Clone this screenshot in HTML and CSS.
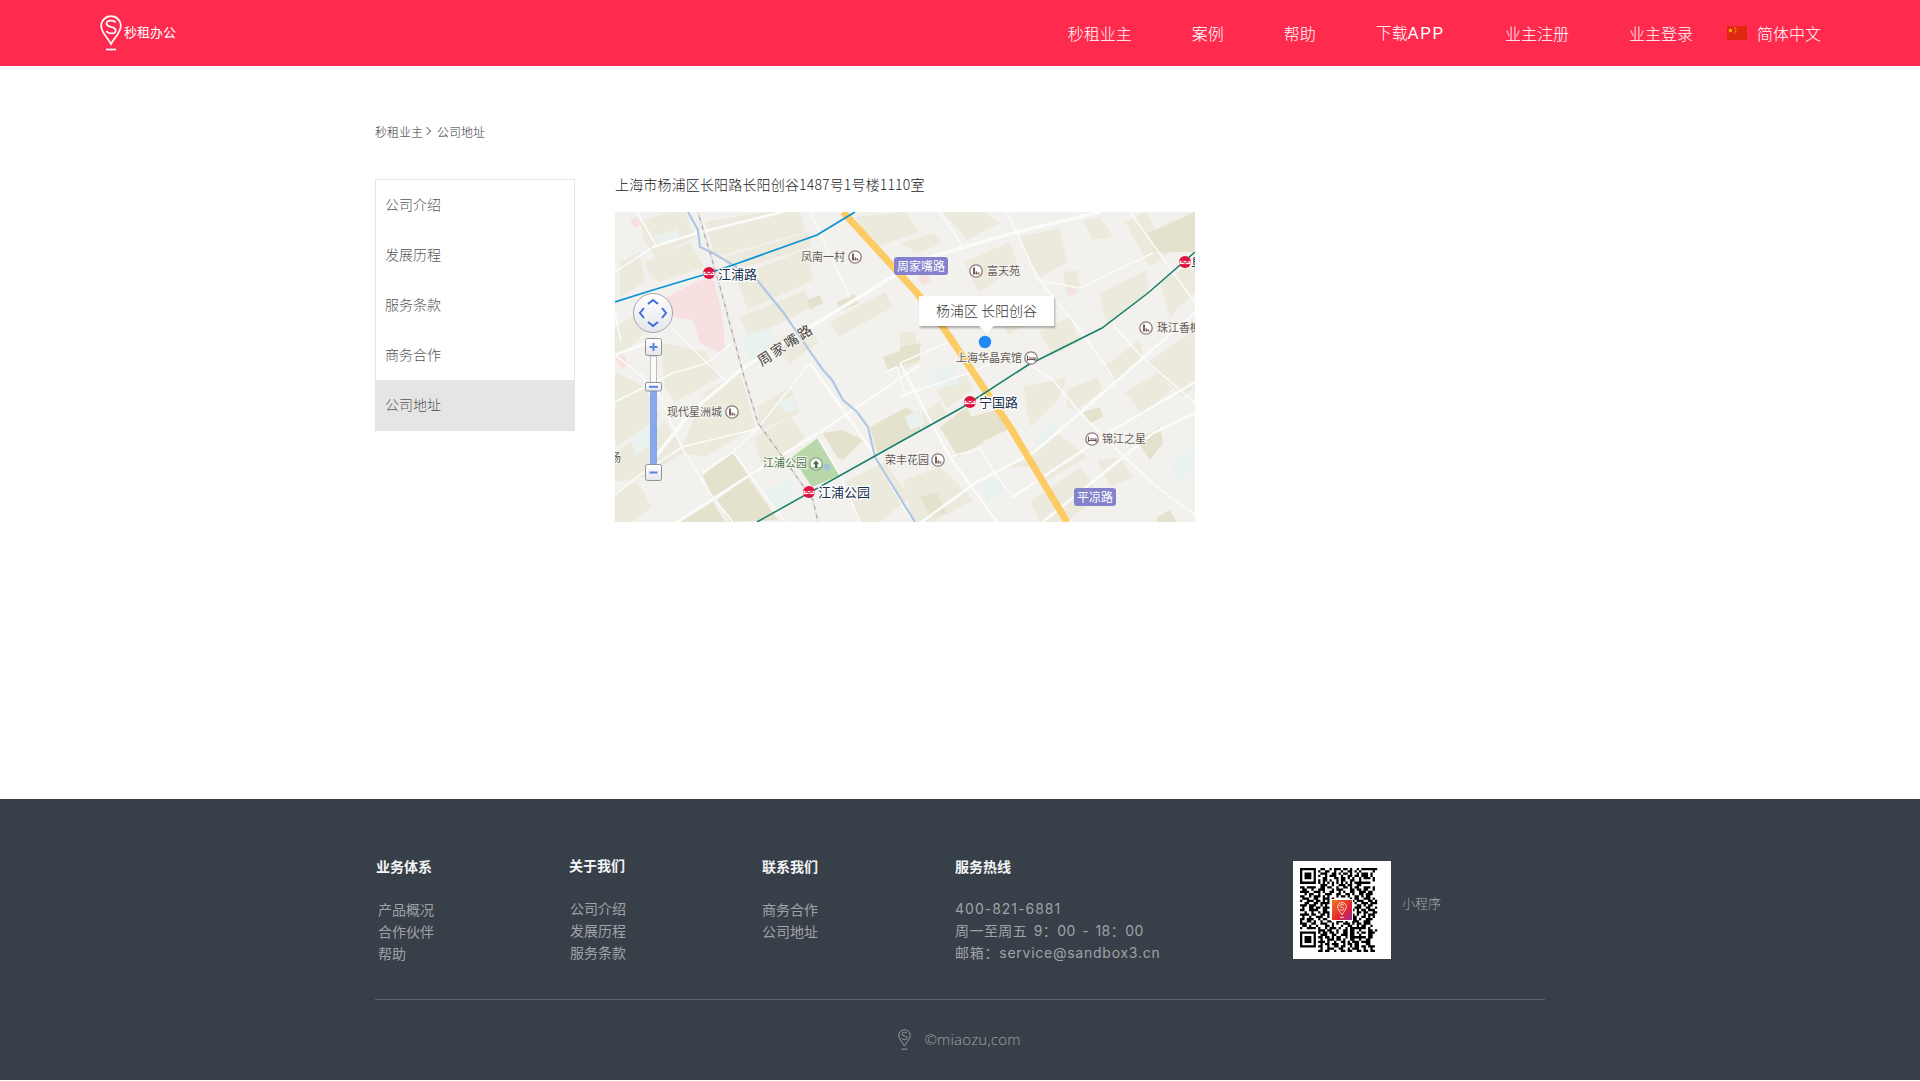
FILE: index.html
```html
<!DOCTYPE html>
<html lang="zh-CN">
<head>
<meta charset="utf-8">
<title>公司地址</title>
<link rel="stylesheet" href="styles.css">
</head>
<body>
<svg class="defs" width="0" height="0" aria-hidden="true">
  <defs>
    <symbol id="pin" viewBox="0 0 22 36">
      <path class="pin-line" d="M11 1.200C5.400 1.200 1.200 5.500 1.200 11c0 6.600 6.200 11.300 9.800 18 3.600-6.700 9.800-11.400 9.800-18C20.800 5.500 16.600 1.200 11 1.200z"/>
      <path class="pin-line" d="M15.500 7.500C14.200 5 6.800 4.600 6.500 8.500c-.3 4.300 9.200 2.500 9.200 7 0 3.900-7.400 3.700-9.300.6"/>
      <path class="pin-line" d="M6 34.500h10"/>
    </symbol>
    <symbol id="metro" viewBox="0 0 12 12">
      <circle cx="6" cy="6" r="6" fill="#e0103f"/>
      <path d="M.5 6.500h11" stroke="#fff" stroke-width="3.200"/>
      <path d="M2 6.800c1-1.600 2-1.600 2.800-.4.600.8 1.800.8 2.400 0 .8-1.200 1.800-1.200 2.800.4" fill="none" stroke="#e0103f" stroke-width="1.200"/>
    </symbol>
    <symbol id="poi-b" viewBox="0 0 14 14">
      <circle cx="7" cy="7" r="6.200" fill="#fff" stroke="#8c7a78" stroke-width="1.300"/>
      <path d="M4 10.500V3.500h2v7zM6.500 10.500v-3h1.800v3zM8.800 10.500v-2h1.500v2z" fill="#7a5f5c"/>
    </symbol>
    <symbol id="poi-h" viewBox="0 0 14 14">
      <circle cx="7" cy="7" r="6.200" fill="#fff" stroke="#8c7a78" stroke-width="1.300"/>
      <path d="M3.500 4.500v5.500M3.500 8.500h7.500V10M5 7h6v1.500" fill="none" stroke="#6d5552" stroke-width="1.200"/>
    </symbol>
    <symbol id="poi-p" viewBox="0 0 14 14">
      <circle cx="7" cy="7" r="6.200" fill="#fff" stroke="#8c9a80" stroke-width="1.300"/>
      <path d="M7 3.200l3 4H8.300v3.300H11v.7H3.500v-.7H6V7.200H4z" fill="#3f6d3a"/>
    </symbol>
    <linearGradient id="pad" x1="0" y1="0" x2="0" y2="1">
      <stop offset="0" stop-color="#fff"/>
      <stop offset="1" stop-color="#e4e6ea"/>
    </linearGradient>
  </defs>
</svg>

<header class="topbar">
  <a class="brand">
    <svg class="brand-pin"><use href="#pin"/></svg>
    <span class="brand-name">秒租办公</span>
  </a>
  <nav class="topnav">
    <a class="topnav-item">秒租业主</a>
    <a class="topnav-item">案例</a>
    <a class="topnav-item">帮助</a>
    <a class="topnav-item">下载<span class="topnav-latin">APP</span></a>
    <a class="topnav-item">业主注册</a>
    <a class="topnav-item">业主登录</a>
    <a class="lang">
      <svg class="flag" viewBox="0 0 20 14">
        <rect width="20" height="14" fill="#de2910"/>
        <path d="M3.500 2l.6 1.700h1.800l-1.500 1 .6 1.700-1.500-1-1.500 1 .6-1.700-1.500-1h1.800z" fill="#ffde00"/>
        <path d="M7.300 1.300h.9v.9h-.9zM8.300 3h.9v.9h-.9zM8.300 5h.9v.9h-.9zM7.300 6.600h.9v.9h-.9z" fill="#ffde00"/>
      </svg>
      <span>简体中文</span>
    </a>
  </nav>
</header>

<main class="page">
  <div class="crumbs"><span>秒租业主</span><span class="crumb-sep"></span><span>公司地址</span></div>
  <div class="content">
    <ul class="side">
      <li class="side-item">公司介绍</li>
      <li class="side-item">发展历程</li>
      <li class="side-item">服务条款</li>
      <li class="side-item">商务合作</li>
      <li class="side-item side-item-on">公司地址</li>
    </ul>
    <section class="address">
      <p class="address-line">上海市杨浦区长阳路长阳创谷1487号1号楼1110室</p>
      <div class="map">
        <svg class="map-art" viewBox="0 0 580 310" width="580" height="310">
          <rect width="580" height="310" fill="#f3f1ee"/>
          <g class="tan">
            <path d="M25 10 55 0h15l10 25-40 20-10-15z"/><path d="M30 50 75 30l15 25-45 15-10-5z"/>
            <path d="M90 10 150 0h35l5 20-90 25z"/><path d="M110 45 195 20v15L115 60z"/>
            <path d="M5 50 25 40l5 30L5 85z"/><path d="M0 115 45 90l5 10-40 40-10 5z"/>
            <path d="M45 130 90 140l15 25-45 25-10-15z"/><path d="M0 160 30 175l15 30L0 235z"/>
            <path d="M0 240 50 210 70 240 30 265 0 270z"/><path d="M90 180 125 160l15 55-50 30-25-5z"/>
            <path d="M120 65 190 38l8 30-65 30z"/><path d="M125 105 190 78l5 18-60 30z"/>
            <path d="M142 195 175 175l10 26-40 17z"/><path d="M160 130 192 112l12 18-30 22z"/>
            <path d="M328 0h40l17 11-33 17z"/><path d="M285 31 318 21l10 10-26 10z"/>
            <path d="M405 25 445 16l7 35-27 14-13-20z"/><path d="M468 8 485 5l13 20-20 3z"/>
            <path d="M448 60 462 58l3 20-13 7z"/><path d="M485 81 532 58l1 23-41 30-4-10z"/>
            <path d="M452 178 482 165l6 13-26 20-10-3z"/><path d="M488 155 525 128l3 17-26 26z"/>
            <path d="M532 151 580 118v57l-12 10z"/><path d="M408 175 452 165l-7 20-30 30z"/>
            <path d="M395 255 442 221l30 24-44 26-10-16z"/><path d="M288 268 325 255l33 33-40 22h-20z"/>
            <path d="M482 248 505 245l13 20-23 10z"/><path d="M545 70 580 50v30l-25 25z"/>
            <path d="M350 50 395 30l8 25-40 25z"/><path d="M300 120h-15v40l20-10z"/>
            <path d="M510 10 530 0l25 40-20 15z"/><path d="M320 175 350 160l8 18-26 18z"/>
            <path d="M215 110 270 80l8 15-55 30z"/><path d="M0 280 22 270l15 25-20 15H0z"/>
            <path d="M230 270 270 250l25 35-30 25h-20z"/><path d="M140 225 175 205l15 20-30 30-15-5z"/>
            <path d="M415 290 465 255l20 30-35 25h-25z"/><path d="M510 180 545 160l12 18-30 25z"/>
            <path d="M240 5 290 0l15 20-45 15z"/><path d="M380 100 410 85l12 20-28 18z"/>
            <path d="M425 120 455 105l10 25-28 14z"/><path d="M300 205 325 190l8 14-25 14z"/>
          </g>
          <g class="tan-dark">
            <path d="M88 263 118 241l15 22-35 25z"/><path d="M102 288 133 265l30 43-48 2z"/>
            <path d="M65 310 98 290l12 20z"/><path d="M268 145 305 131v17l-32 10z"/>
            <path d="M192 88 205 83l3 8-13 7z"/><path d="M208 221 228 218l20 10-20 20-6-3z"/>
            <path d="M533 21 580 0v40h-40z"/><path d="M325 215 352 195l16 36-25 14z"/>
            <path d="M355 205 382 198l10 20-27 13z"/><path d="M285 135l23-4-23 20z"/>
            <path d="M522 228 545 215l3 16-13 17z"/><path d="M305 285 322 281l10 20-17 4z"/>
            <path d="M468 200 485 195l3 10-13 6z"/><path d="M222 90 240 82l3 10-18 7z"/>
            <path d="M542 305 555 298l7 12h-20z"/><path d="M255 215 292 195l13 10v13l-43 23z"/>
          </g>
          <g class="teal">
            <path d="M38 25 62 16l3 12-20 5z"/><path d="M125 125 155 115l8 25-25 15z"/>
            <path d="M313 161 338 151l7 20-23 7z"/><path d="M365 271 385 261l5 20-18 10z"/>
            <path d="M418 228 442 208l3 10-20 20z"/><path d="M15 225 35 215l8 15-22 12z"/>
            <path d="M150 280 175 265l5 25-18 10z"/><path d="M165 190l12-6 5 12-12 5z"/>
            <path d="M555 250 580 235v25l-18 12z"/><path d="M290 205l15-8 5 15-15 6z"/>
          </g>
          <g class="pink">
            <path d="M52 85 85 68l13-2 9 35 3 34-5 6-20-10-7-23-20-3z"/><path d="M15 8 22 5l5 8-7 3z"/>
            <path d="M0 145 8 140l5 12-6 5z"/><path d="M303 65l10-3 3 8-9 3z"/>
            <path d="M451 76l6-3 5 8-6 2z"/>
          </g>
          <path class="park" d="M177 245 203 226l22 37-28 12z"/>
          <circle class="pond" cx="212" cy="255" r="3.500"/>

          <g class="rd rd-s">
            <path d="M22 0 42 35"/><path d="M195 0 235 86"/><path d="M0 143 28 165 40 188"/>
            <path d="M58 116 92 151 110 168"/><path d="M0 190 58 161 92 151 117 131"/>
            <path d="M42 178 67 236 95 281 118 310"/><path d="M0 283 22 265 67 235 145 216"/>
            <path d="M87 261 118 240 143 216 195 151"/><path d="M118 240 135 263 170 310"/>
            <path d="M325 0 348 35"/><path d="M392 0 422 65 465 118 498 165"/><path d="M422 68 465 76 538 41"/>
            <path d="M515 0 580 91"/><path d="M498 113 528 146 580 191"/>
            <path d="M412 151 438 168 465 201 502 238 542 275 580 303"/>
            <path d="M285 151 332 131"/><path d="M285 185 362 158 398 141"/>
            <path d="M335 245 365 236 382 265 398 285"/><path d="M0 60 38 35"/>
            <path d="M270 160 282 155 290 183 305 175"/><path d="M0 100l6 30"/>
            <path d="M225 263 245 310"/><path d="M203 226 225 263"/>
          </g>
          <g class="rd rd-m">
            <path d="M38 35 82 21 168 0"/><path d="M62 310 135 263 208 218 305 153"/>
            <path d="M195 151 258 241 295 305"/><path d="M418 241 465 201 528 146 580 101"/>
            <path d="M305 311 362 270 418 241"/><path d="M285 151 308 195 335 245 382 310"/>
            <path d="M398 285 458 245 498 218 580 170"/><path d="M428 310 538 221 580 201"/>
            <path d="M0 143 22 135 45 125"/>
          </g>
          <path class="rd rd-l" d="M38 248 75 201 128 156 195 115 282 62 315 45 398 21 485 0"/>
          <path class="water" d="M73 0 83 18 85 35 98 41 118 53 142 68 168 100 192 135 208 158 217 168 228 188 242 200 253 215 260 245 282 281 300 310"/>
          <path class="rail" d="M83 0 105 75 128 161 143 211 172 251 198 288 203 310"/>
          <path class="rail-dash" d="M83 0 105 75 128 161 143 211 172 251 198 288 203 310"/>
          <path class="highway" d="M228 0 302 81 328 115 368 175 395 215 452 310"/>
          <path class="line-blue" d="M0 90 38 78 88 63 118 53 202 23 240 0"/>
          <path class="line-green" d="M142 310 285 230 348 195 413 153 487 116 533 81 580 40"/>

          <use href="#metro" x="88" y="55" width="12" height="12"/>
          <use href="#metro" x="188" y="274" width="12" height="12"/>
          <use href="#metro" x="349" y="184" width="12" height="12"/>
          <use href="#metro" x="564" y="44" width="12" height="12"/>
          <use href="#poi-b" x="233" y="38" width="14" height="14"/>
          <use href="#poi-b" x="354" y="52" width="14" height="14"/>
          <use href="#poi-b" x="110" y="193" width="14" height="14"/>
          <use href="#poi-b" x="316" y="241" width="14" height="14"/>
          <use href="#poi-b" x="524" y="109" width="14" height="14"/>
          <use href="#poi-h" x="409" y="139" width="14" height="14"/>
          <use href="#poi-h" x="470" y="220" width="14" height="14"/>
          <use href="#poi-p" x="194" y="245" width="14" height="14"/>

          <text class="lb-metro" x="103" y="67">江浦路</text>
          <text class="lb-metro" x="203" y="285">江浦公园</text>
          <text class="lb-metro" x="364" y="195">宁国路</text>
          <text class="lb-metro" x="576" y="55">阜</text>
          <text class="lb-poi" x="186" y="49">凤南一村</text>
          <text class="lb-poi" x="372" y="63">富天苑</text>
          <text class="lb-poi" x="341" y="150">上海华晶宾馆</text>
          <text class="lb-poi" x="52" y="204">现代星洲城</text>
          <text class="lb-poi" x="270" y="252">荣丰花园</text>
          <text class="lb-poi" x="487" y="231">锦江之星</text>
          <text class="lb-poi" x="542" y="120">珠江香榭</text>
          <text class="lb-poi" x="-5" y="250">场</text>
          <text class="lb-park" x="148" y="255">江浦公园</text>
          <text class="lb-road" transform="translate(170 132) rotate(-33)">周家嘴路</text>

          <rect class="badge" x="279" y="45" width="54" height="18" rx="3"/>
          <text class="lb-badge" x="282" y="58.500">周家嘴路</text>
          <rect class="badge" x="459" y="276" width="42" height="18" rx="3"/>
          <text class="lb-badge" x="462" y="289.500">平凉路</text>

          <g class="ctl">
            <circle class="ctl-pad" cx="38" cy="101" r="19.500"/>
            <path class="ctl-arrow" d="M33 92l5-4 5 4M33 110l5 4 5-4M29 96l-4 5 4 5M47 96l4 5-4 5"/>
            <rect class="ctl-track" x="35.500" y="144" width="6" height="27"/>
            <rect class="ctl-fill" x="35.500" y="179" width="6" height="74"/>
            <rect class="ctl-btn" x="30.500" y="126.500" width="16" height="17" rx="2"/>
            <path class="ctl-mark" d="M34.500 135h8M38.500 131v8"/>
            <rect class="ctl-btn" x="30.500" y="170.500" width="16" height="8.500" rx="1.500"/>
            <path class="ctl-mark" d="M34 174.800h9"/>
            <rect class="ctl-btn" x="30.500" y="252.500" width="16" height="16" rx="2"/>
            <path class="ctl-mark" d="M34.500 260.500h8"/>
          </g>
          <circle class="here" cx="370" cy="130" r="6.200"/>
        </svg>
        <div class="map-tip">杨浦区 长阳创谷</div>
      </div>
    </section>
  </div>
</main>

<footer class="foot">
  <div class="foot-top">
    <div class="foot-col">
      <h4 class="foot-title">业务体系</h4>
      <ul class="foot-list foot-list-in"><li>产品概况</li><li>合作伙伴</li><li>帮助</li></ul>
    </div>
    <div class="foot-col foot-col-up">
      <h4 class="foot-title">关于我们</h4>
      <ul class="foot-list foot-list-nudge"><li>公司介绍</li><li>发展历程</li><li>服务条款</li></ul>
    </div>
    <div class="foot-col">
      <h4 class="foot-title">联系我们</h4>
      <ul class="foot-list"><li>商务合作</li><li>公司地址</li></ul>
    </div>
    <div class="foot-col foot-col-wide">
      <h4 class="foot-title">服务热线</h4>
      <ul class="foot-list foot-list-up foot-list-spaced"><li class="hot-num">400-821-6881</li><li class="hot-time">周一至周五 9：00 - 18：00</li><li class="hot-mail">邮箱：service@sandbox3.cn</li></ul>
    </div>
    <div class="foot-qr">
      <div class="qr">
        <svg class="qr-art" viewBox="0 0 37 37">
          <path class="qr-mods" d="M0 .5h7m2 0h2m2 0h1m1 0h3m1 0h2m1 0h1m2 0h1m1 0h7M0 1.500h1m5 0h1m1 0h1m2 0h2m2 0h1m2 0h1m2 0h2m1 0h1m1 0h1m5 0h1M0 2.500h1m1 0h3m1 0h1m2 0h3m2 0h2m1 0h1m1 0h2m1 0h1m2 0h1m1 0h3m1 0h1M0 3.500h1m1 0h3m1 0h1m1 0h1m2 0h1m1 0h3m2 0h1m2 0h2m1 0h2m1 0h3m1 0h1M0 4.500h1m1 0h3m1 0h1m3 0h2m3 0h2m1 0h2m1 0h1m1 0h1m2 0h1m1 0h3m1 0h1M0 5.500h1m5 0h1m1 0h1m1 0h2m1 0h1m2 0h1m1 0h2m2 0h2m2 0h1m5 0h1M0 6.500h7m1 0h1m1 0h1m1 0h1m1 0h1m1 0h1m1 0h1m1 0h1m1 0h1m1 0h7M9 7.500h3m2 0h1m2 0h3m1 0h2m2 0h2M0 8.500h2m1 0h4m2 0h2m1 0h2m2 0h1m2 0h2m1 0h1m1 0h2m2 0h3m1 0h1M1 9.500h2m2 0h1m2 0h3m3 0h1m1 0h3m3 0h2m1 0h2m1 0h2m2 0h1M0 10.500h4m2 0h3m1 0h1m2 0h2m2 0h1m1 0h1m2 0h2m2 0h3m1 0h2M2 11.500h1m1 0h2m2 0h1m2 0h3m2 0h2m2 0h2m1 0h1m2 0h2m1 0h3M0 12.500h2m2 0h1m1 0h3m1 0h1m1 0h1m3 0h1m1 0h2m1 0h1m2 0h2m1 0h1m1 0h2M1 13.500h3m2 0h2m2 0h3m1 0h1m7 0h1m1 0h2m2 0h3m1 0h1M0 14.500h1m2 0h3m1 0h2m1 0h1m1 0h1m9 0h2m1 0h3m2 0h2m1 0h1M2 15.500h2m2 0h2m1 0h4m9 0h1m1 0h1m2 0h3m1 0h3M0 16.500h3m1 0h3m2 0h1m1 0h1m9 0h2m2 0h2m1 0h1m1 0h2M1 17.500h1m2 0h2m1 0h2m1 0h3m9 0h1m1 0h3m2 0h2m2 0h1M0 18.500h2m2 0h4m2 0h2m10 0h2m1 0h1m1 0h2m1 0h3M2 19.500h1m2 0h1m2 0h1m1 0h3m9 0h1m2 0h2m1 0h2m2 0h2M0 20.500h4m1 0h2m2 0h2m1 0h1m9 0h2m1 0h1m2 0h1m1 0h3M1 21.500h1m2 0h1m2 0h3m2 0h1m7 0h2m1 0h2m2 0h2m1 0h1m1 0h1M0 22.500h2m1 0h3m2 0h1m1 0h2m2 0h2m1 0h1m1 0h2m2 0h2m1 0h1m2 0h3M0 23.500h1m2 0h2m1 0h1m2 0h1m2 0h2m2 0h3m1 0h1m2 0h3m2 0h3M0 24.500h3m2 0h2m2 0h3m2 0h1m1 0h1m2 0h3m1 0h1m1 0h2m1 0h3M1 25.500h2m1 0h1m2 0h1m3 0h2m1 0h1m3 0h1m2 0h2m2 0h1m1 0h2m2 0h1M0 26.500h1m2 0h4m1 0h1m2 0h1m1 0h3m1 0h1m2 0h1m1 0h7m1 0h1M8 27.500h3m1 0h2m2 0h1m2 0h2m1 0h2m2 0h1m3 0h2m1 0h1M0 28.500h7m1 0h1m1 0h2m1 0h2m1 0h1m2 0h2m1 0h2m1 0h1m1 0h2m1 0h3M0 29.500h1m5 0h1m2 0h3m2 0h2m2 0h3m1 0h2m2 0h1m3 0h2M0 30.500h1m1 0h3m1 0h1m1 0h2m1 0h2m1 0h1m1 0h2m2 0h1m1 0h7m1 0h2M0 31.500h1m1 0h3m1 0h1m2 0h1m2 0h3m1 0h2m1 0h1m2 0h2m2 0h1m2 0h2M0 32.500h1m1 0h3m1 0h1m1 0h3m1 0h1m2 0h1m2 0h2m1 0h1m1 0h3m1 0h4M0 33.500h1m5 0h1m2 0h1m1 0h2m1 0h3m2 0h1m1 0h2m1 0h2m3 0h2M0 34.500h7m1 0h2m2 0h1m2 0h2m1 0h2m2 0h1m1 0h2m1 0h2m1 0h3M9 35.500h1m2 0h3m2 0h2m2 0h1m1 0h3m2 0h1m2 0h1M8 36.500h2m1 0h2m2 0h1m2 0h2m1 0h2m2 0h2m1 0h2m1 0h2"/>
        </svg>
        <span class="qr-logo">
          <svg class="qr-pin"><use href="#pin"/></svg>
        </span>
      </div>
      <span class="qr-label">小程序</span>
    </div>
  </div>
  <div class="foot-bottom">
    <svg class="foot-pin"><use href="#pin"/></svg>
    <span class="foot-copy">©miaozu,com</span>
  </div>
</footer>
</body>
</html>
```
FILE: styles.css
```css
* { box-sizing: border-box; }
html, body { margin: 0; padding: 0; background: #fff; }
body {
  height: 1081px;
  overflow: hidden;
  font-family: "Noto Sans CJK SC", "Liberation Sans", sans-serif;
  color: #333;
}
ul { margin: 0; padding: 0; list-style: none; }
h4, p { margin: 0; font-weight: 400; }
.defs { display: block; height: 0; }

.pin-line { fill: none; stroke: currentColor; stroke-width: 1.700; }

/* header */
.topbar {
  height: 66px;
  background: #ff2b4f;
  color: #fff;
  display: flex;
  align-items: center;
  justify-content: space-between;
  padding: 0 99px 0 100px;
}
.brand { display: flex; align-items: center; gap: 2px; }
.brand-pin { width: 22px; height: 36px; margin-top: -1px; }
.brand-name { font-size: 13px; font-weight: 400; line-height: 20px; margin-top: -2px; }
.topnav { display: flex; align-items: center; font-size: 16px; line-height: 20px; font-weight: 300; }
.topnav-item { margin-left: 60px; }
.topnav-latin { font-family: "Liberation Sans", sans-serif; letter-spacing: 1.700px; }
.lang { display: flex; align-items: center; gap: 10px; margin-left: 34px; }
.flag { width: 20px; height: 14px; }

/* main */
.page { width: 1170px; height: 733px; margin: 0 auto; padding-top: 56px; }
.crumbs {
  display: flex;
  align-items: center;
  height: 18px;
  font-size: 12px;
  font-weight: 300;
}
.crumb-sep {
  width: 6px;
  height: 6px;
  margin: 0 7px 0 1px;
  border-top: 1px solid #777;
  border-right: 1px solid #777;
  transform: rotate(45deg);
}
.content { display: flex; gap: 40px; margin-top: 39px; }
.side { width: 200px; height: 252px; border: 1px solid #e5e5e5; }
.side-item { height: 50px; line-height: 48px; padding-left: 9px; font-size: 14px; font-weight: 300; color: #555; }
.side-item-on { background: #e5e5e5; margin: 0 -1px; padding-left: 10px; }
.address { width: 580px; }
.address-line { font-size: 14px; line-height: 20px; font-weight: 300; color: #222; letter-spacing: .16px; margin-top: -5px; margin-bottom: 18px; }

/* map */
.map { position: relative; width: 580px; height: 310px; overflow: hidden; }
.map-art { display: block; }
.tan { fill: #ecEADC; filter: blur(.5px); }
.tan-dark { fill: #e4e1cd; filter: blur(.5px); }
.teal { fill: #e9f2ee; filter: blur(.5px); }
.pink { fill: #f8dfe0; filter: blur(.5px); }
.park { fill: #b9d8aa; }
.pond { fill: #9fc4dc; }
.rd { fill: none; stroke: #fbfbfa; stroke-linejoin: round; }
.rd-s { stroke-width: 1.600; }
.rd-m { stroke-width: 2.600; }
.rd-l { stroke-width: 3.600; }
.water { fill: none; stroke: #aec7e4; stroke-width: 2.200; }
.rail { fill: none; stroke: #a8a8a8; stroke-width: 1.300; }
.rail-dash { fill: none; stroke: #fff; stroke-width: .9; stroke-dasharray: 5 4; }
.highway { fill: none; stroke: #fdcb63; stroke-width: 7; }
.line-blue { fill: none; stroke: #0a93d2; stroke-width: 1.800; }
.line-green { fill: none; stroke: #157f68; stroke-width: 1.500; }
.lb-metro { font-size: 13px; fill: #17304d; paint-order: stroke; stroke: #fff; stroke-width: 2.500; }
.lb-poi { font-size: 11px; fill: #635b55; paint-order: stroke; stroke: #f6f5f1; stroke-width: 2; }
.lb-park { font-size: 11px; fill: #4c7a4c; paint-order: stroke; stroke: #f6f5f1; stroke-width: 2; }
.lb-road { font-size: 14px; letter-spacing: 2px; fill: #4f4a45; text-anchor: middle; dominant-baseline: central; paint-order: stroke; stroke: #f6f5f1; stroke-width: 2; }
.badge { fill: #8482cc; }
.lb-badge { font-size: 12px; fill: #fff; }
.ctl-pad { fill: url(#pad); stroke: #a3a6aa; stroke-width: 1; }
.ctl-arrow { fill: none; stroke: #3f6ed8; stroke-width: 2; }
.ctl-track { fill: #fbfbfb; stroke: #b0b0b0; stroke-width: .8; }
.ctl-fill { fill: #88a8ee; stroke: #6a8bd8; stroke-width: .6; }
.ctl-btn { fill: url(#pad); stroke: #8e9299; stroke-width: 1; }
.ctl-mark { fill: none; stroke: #5b83e2; stroke-width: 2; }
.here { fill: #1e8af5; }
.map-tip {
  position: absolute;
  left: 304px;
  top: 84px;
  width: 135px;
  height: 30px;
  background: #fff;
  box-shadow: 1px 2px 2px rgba(0, 0, 0, .3);
  font-size: 14px;
  font-weight: 300;
  line-height: 28px;
  text-align: center;
  color: #333;
}
.map-tip::after {
  content: "";
  position: absolute;
  left: 62px;
  top: 24px;
  width: 11px;
  height: 11px;
  background: #fff;
  transform: rotate(45deg);
}

/* footer */
.foot { height: 281px; background: #373f48; color: #a0a3a6; padding-top: 57px; }
.foot-top {
  width: 1170px;
  height: 144px;
  margin: 0 auto;
  padding-left: 1px;
  border-bottom: 1px solid #5b626b;
  display: flex;
  align-items: flex-start;
}
.foot-col { width: 193px; }
.foot-col-up { margin-top: -1px; }
.foot-col-wide { width: 338px; }
.foot-title { font-size: 14px; line-height: 20px; font-weight: 700; color: #f3f4f5; }
.foot-list { margin-top: 22px; font-size: 14px; line-height: 22px; }
.foot-list-in { padding-left: 2px; }
.foot-list-nudge { padding-left: 1px; }
.foot-list-up { margin-top: 22px; }
.foot-list-spaced { font-family: "Inter", "Noto Sans CJK SC", sans-serif; word-spacing: 2px; }
.hot-num { letter-spacing: 1px; }
.hot-time { letter-spacing: .45px; }
.hot-mail { letter-spacing: .75px; }
.foot-qr { display: flex; align-items: center; gap: 11px; margin-top: 5px; }
.qr { position: relative; width: 98px; height: 98px; background: #fff; padding: 7px; }
.qr-art { display: block; width: 84px; height: 84px; }
.qr-mods { fill: none; stroke: #000; stroke-width: 1; }
.qr-logo {
  position: absolute;
  left: 39px;
  top: 39px;
  width: 20px;
  height: 20px;
  background: linear-gradient(135deg, #f07a1c, #e2242f 60%, #9a2a9c);
  outline: 1px solid #fff;
  color: #fff;
  display: flex;
  align-items: center;
  justify-content: center;
}
.qr-pin { width: 10px; height: 16px; }
.qr-label { font-size: 13px; font-weight: 300; margin-top: -16px; color: #a3a6a9; }
.foot-bottom { display: flex; justify-content: center; align-items: center; gap: 13px; height: 48px; margin-top: 15px; padding-right: 1px; }
.foot-pin { width: 13px; height: 21px; color: #9a9da1; }
.foot-copy { font-family: "Open Sans", sans-serif; font-weight: 300; font-size: 15px; letter-spacing: .2px; line-height: 20px; color: #a0a3a6; }
```
